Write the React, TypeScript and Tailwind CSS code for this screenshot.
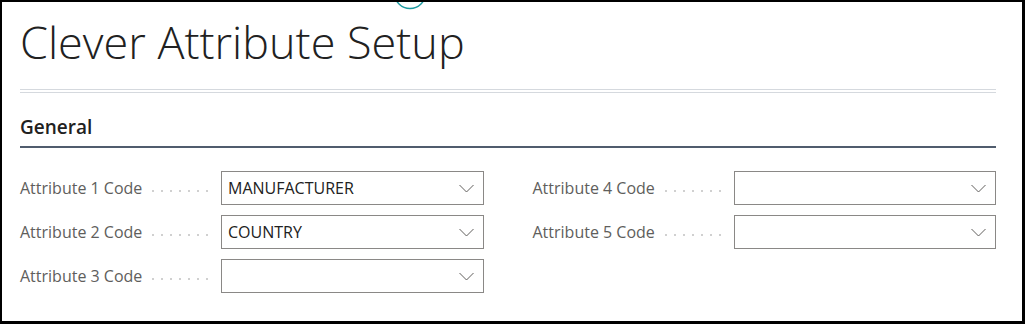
const leftFields = [
  { label: "Attribute 1 Code", value: "MANUFACTURER" },
  { label: "Attribute 2 Code", value: "COUNTRY" },
  { label: "Attribute 3 Code", value: "" },
];

const rightFields = [
  { label: "Attribute 4 Code", value: "" },
  { label: "Attribute 5 Code", value: "" },
];

function Chevron() {
  return (
    <svg width="15" height="9" viewBox="0 0 15 9" className="text-[#605e5c]">
      <path d="M0.5 1 L7.5 8 L14.5 1" fill="none" stroke="currentColor" strokeWidth="1" />
    </svg>
  );
}

function Field({ label, value }: { label: string; value: string }) {
  return (
    <div className="flex h-[34px] items-center">
      <div className="flex w-[201px] shrink-0 items-center">
        <span className="whitespace-nowrap text-[16px] text-[#605e5c]">{label}</span>
        <span className="ml-[10px] mt-[5px] flex gap-[7px]">
          {[0, 1, 2, 3, 4, 5, 6].map((i) => (
            <span key={i} className="h-[2px] w-[2px] rounded-full bg-[#c1c1c1]" />
          ))}
        </span>
      </div>
      <div className="flex h-[34px] flex-1 items-center justify-between border border-[#8a8886] bg-white pl-[6px] pr-[9px]">
        <span className="text-[16px] text-[#212121]">{value}</span>
        <Chevron />
      </div>
    </div>
  );
}

export default function App() {
  return (
    <div
      className="relative h-[324px] w-[1025px] overflow-hidden border-t-2 border-r-[3px] border-b-[3px] border-l-2 border-black bg-white"
      style={{ fontFamily: '"Open Sans", "Noto Sans", sans-serif' }}
    >
      {/* focus ring peeking in from above */}
      <svg className="absolute left-[390px] top-[-2px]" width="40" height="12" viewBox="0 0 40 12">
        <circle cx="18" cy="-7" r="15.5" fill="none" stroke="#1d9aa0" strokeWidth="1.5" />
      </svg>

      <div className="pl-[18px] pr-[26px]">
        <h1 className="pt-[10px] text-[45px] font-light leading-[60px] text-[#212121]">
          Clever Attribute Setup
        </h1>
        <div className="mt-[17px] h-[4px] border-y border-[#d5d9de]" />

        <div className="pt-[21px]">
          <h2 className="text-[19px] font-semibold leading-[26px] text-[#212121]">General</h2>
          <div className="mt-[6px] h-[2px] bg-[#505c6d]" />
        </div>

        <div className="mt-[23px] grid grid-cols-2 gap-x-[49px]">
          <div className="flex flex-col gap-[10px]">
            {leftFields.map((f) => (
              <Field key={f.label} label={f.label} value={f.value} />
            ))}
          </div>
          <div className="flex flex-col gap-[10px]">
            {rightFields.map((f) => (
              <Field key={f.label} label={f.label} value={f.value} />
            ))}
          </div>
        </div>
      </div>
    </div>
  );
}
